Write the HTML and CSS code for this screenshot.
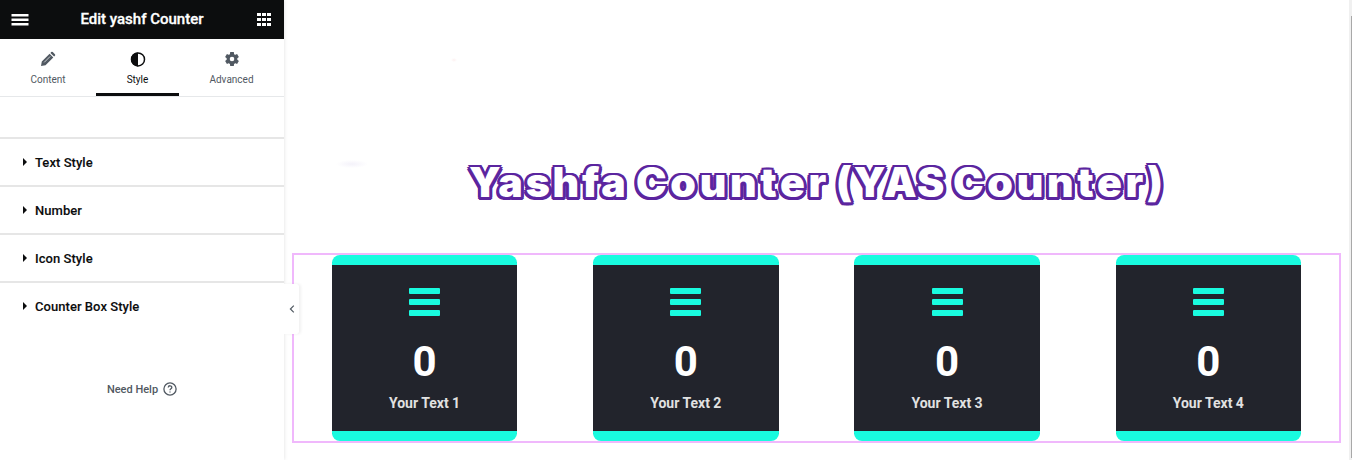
FILE: index.html
```html
<!DOCTYPE html>
<html lang="en">
<head>
<meta charset="utf-8">
<title>Edit yashf Counter</title>
<link rel="stylesheet" href="styles.css">
</head>
<body>
<div class="editor">
  <aside class="panel">
    <header class="panel-header">
      <svg class="menu-icon" width="18" height="14" viewBox="0 0 18 14"><path d="M.5 2.2h17M.5 6.7h17M.5 11.2h17"/></svg>
      <h1>Edit yashf Counter</h1>
      <svg class="grid-icon" width="14" height="14" viewBox="0 0 14 14"><path d="M0 0h4v3H0zM5 0h4v3H5zM10 0h4v3h-4zM0 5h4v3H0zM5 5h4v3H5zM10 5h4v3h-4zM0 10h4v3H0zM5 10h4v3H5zM10 10h4v3h-4z"/></svg>
    </header>
    <nav class="tabs">
      <div class="tab">
        <svg width="16" height="16" viewBox="0 0 16 16"><path fill="currentColor" d="M1 15l.8-4.5 7.8-7.8 3.7 3.7-7.8 7.8zM10.4 1.9l.8-.8q.8-.8 1.6 0l2.1 2.1q.8.8 0 1.6l-.8.8z"/><path d="M4.2 11.4l6-6" stroke="#fff" stroke-width=".7"/></svg>
        <span>Content</span>
      </div>
      <div class="tab active">
        <svg width="16" height="16" viewBox="0 0 16 16"><circle cx="8" cy="8.4" r="6.5" fill="none" stroke="currentColor" stroke-width="1.5"/><path fill="currentColor" d="M8 1.4a7 7 0 0 0 0 14z"/></svg>
        <span>Style</span>
      </div>
      <div class="tab">
        <svg width="16" height="16" viewBox="0 0 16 16"><g fill="currentColor"><path fill-rule="evenodd" d="M8 2.7a5.3 5.3 0 1 0 0 10.6A5.3 5.3 0 0 0 8 2.7zm0 3a2.3 2.3 0 1 1 0 4.6 2.3 2.3 0 0 1 0-4.6z"/><path id="tooth" d="M6.2 1.1h3.6l.4 3H5.8z"/><use href="#tooth" transform="rotate(60 8 8)"/><use href="#tooth" transform="rotate(120 8 8)"/><use href="#tooth" transform="rotate(180 8 8)"/><use href="#tooth" transform="rotate(240 8 8)"/><use href="#tooth" transform="rotate(300 8 8)"/></g></svg>
        <span>Advanced</span>
      </div>
    </nav>
    <ul class="sections">
      <li>Text Style</li>
      <li>Number</li>
      <li>Icon Style</li>
      <li>Counter Box Style</li>
    </ul>
    <div class="help">Need Help
      <svg width="14" height="14" viewBox="0 0 14 14"><circle cx="7" cy="7" r="6.1"/><path d="M5.2 5.5c.2-2.4 3.7-2.2 3.6 0C8.8 6.8 7 6.7 7 8.2M7 9.4v1.2"/></svg>
    </div>
    <div class="collapse"><svg width="6" height="8" viewBox="0 0 6 8"><path d="M4.8.6 1.4 4l3.4 3.4"/></svg></div>
  </aside>
  <main class="preview">
    <h2 class="title"><span class="w1">Yashfa</span> <span class="w2">Counter</span> <span class="w3">(YAS</span> <span class="w4">Counter)</span></h2>
    <section class="counters">
      <article class="card"><svg class="bars" width="31" height="28" viewBox="0 0 31 28"><rect width="31" height="6" rx="1"/><rect y="11" width="31" height="6" rx="1"/><rect y="22" width="31" height="6" rx="1"/></svg><strong>0</strong><p>Your Text 1</p></article>
      <article class="card"><svg class="bars" width="31" height="28" viewBox="0 0 31 28"><rect width="31" height="6" rx="1"/><rect y="11" width="31" height="6" rx="1"/><rect y="22" width="31" height="6" rx="1"/></svg><strong>0</strong><p>Your Text 2</p></article>
      <article class="card"><svg class="bars" width="31" height="28" viewBox="0 0 31 28"><rect width="31" height="6" rx="1"/><rect y="11" width="31" height="6" rx="1"/><rect y="22" width="31" height="6" rx="1"/></svg><strong>0</strong><p>Your Text 3</p></article>
      <article class="card"><svg class="bars" width="31" height="28" viewBox="0 0 31 28"><rect width="31" height="6" rx="1"/><rect y="11" width="31" height="6" rx="1"/><rect y="22" width="31" height="6" rx="1"/></svg><strong>0</strong><p>Your Text 4</p></article>
    </section>
  </main>
  <div class="scrollbar"></div>
</div>
</body>
</html>
```
FILE: styles.css
```css
* { box-sizing: border-box; margin: 0; padding: 0; }
body { font-family: Roboto, sans-serif; background: #fff; overflow: hidden; }
svg { display: block; flex: none; }
.editor { display: flex; height: 460px; }

.panel { position: relative; width: 284px; flex: none; background: #fff; box-shadow: 0 0 4px rgba(0,0,0,.13); z-index: 1; }
.panel-header { display: flex; align-items: center; justify-content: space-between; height: 39px; padding: 0 13px 0 11px; background: #0c0d0e; color: #fff; }
.panel-header h1 { padding: 0 2px 2px 0; font-size: 15px; font-weight: 500; line-height: 36px; -webkit-text-stroke: .3px #fff; }
.menu-icon { stroke: #fff; stroke-width: 2.4; }
.grid-icon { fill: #fff; }
.tabs { display: flex; gap: 7px; height: 58px; padding-left: 6px; border-bottom: 1px solid #e6e8ea; }
.tab { display: flex; flex-direction: column; align-items: center; width: 83px; height: 57px; padding-top: 12px; gap: 7px; font-size: 10px; line-height: 12px; color: #515962; }
.tab:last-child { width: 91px; }
.tab:first-child { padding-left: 1px; }
.tab.active { color: #0c0d0e; border-bottom: 3px solid #0c0d0e; }
.sections { margin-top: 40px; list-style: none; }
.sections li { display: flex; align-items: center; height: 48px; padding-left: 23px; gap: 8px; border-top: 2px solid #e6e6e6; color: #0c0d0e; font-size: 13px; font-weight: 500; letter-spacing: .05px; -webkit-text-stroke: .1px #0c0d0e; }
.sections li::before { content: ""; border-left: 4px solid #0c0d0e; border-top: 4px solid transparent; border-bottom: 4px solid transparent; }
.help { display: flex; align-items: center; justify-content: center; gap: 5px; margin-top: 52px; height: 16px; color: #515962; font-size: 11px; font-weight: 500; }
.help svg { fill: none; stroke: #515962; stroke-width: 1.3; }
.collapse { position: absolute; left: 284px; top: 284px; width: 15px; height: 50px; display: flex; align-items: center; justify-content: center; background: #fff; box-shadow: 2px 0 3px rgba(0,0,0,.06); border-radius: 0 3px 3px 0; }
.collapse svg { fill: none; stroke: #515962; stroke-width: 1.2; }

.preview { flex: 1; padding: 155px 8px 0 8px; background: radial-gradient(ellipse 16px 4px at 68px 164px, #f4f2fa, transparent) no-repeat, radial-gradient(ellipse 3px 2px at 170px 60px, #fdf0f0, transparent) no-repeat; }
.title { display: flex; height: 98px; padding-left: 177px; color: #fff; font: 900 41px/54px Inter, sans-serif; white-space: nowrap; -webkit-text-stroke: 3.6px #fff; paint-order: stroke fill; text-shadow: -3px 0 #5b259f, 3px 0 #5b259f, 0 -2px #5b259f, 0 3px #5b259f, -2px -2px #5b259f, 2px -2px #5b259f, -3px 2px #5b259f, 3px 2px #5b259f, 2px 3px #5b259f, -2px 3px #5b259f; }
.w1 { width: 167px; letter-spacing: 2.8px; }
.w2 { width: 200px; letter-spacing: 3.7px; }
.w3 { width: 117px; letter-spacing: 1.8px; }
.w4 { letter-spacing: 3.7px; }
.counters { display: grid; grid-template-columns: repeat(4, 1fr); height: 190px; border: 2px solid #f0b8fc; }
.card { display: flex; flex-direction: column; align-items: center; margin: 0 38px 0 37.9px; height: 186px; padding-top: 23px; background: #22242c; border-top: 10px solid #19fbdf; border-bottom: 10px solid #19fbdf; border-radius: 8px; }
.bars { fill: #19fbdf; }
.card strong { margin-top: 21px; color: #fff; font-size: 42px; line-height: 50px; font-weight: 700; }
.card p { margin-top: 8px; color: #e1e1e1; font-size: 14px; line-height: 17px; font-weight: 700; }
.scrollbar { width: 3px; flex: none; background: linear-gradient(#a8a8a8, #a8a8a8) right 16px / 1px 442px no-repeat #f0f0f0; }
```
